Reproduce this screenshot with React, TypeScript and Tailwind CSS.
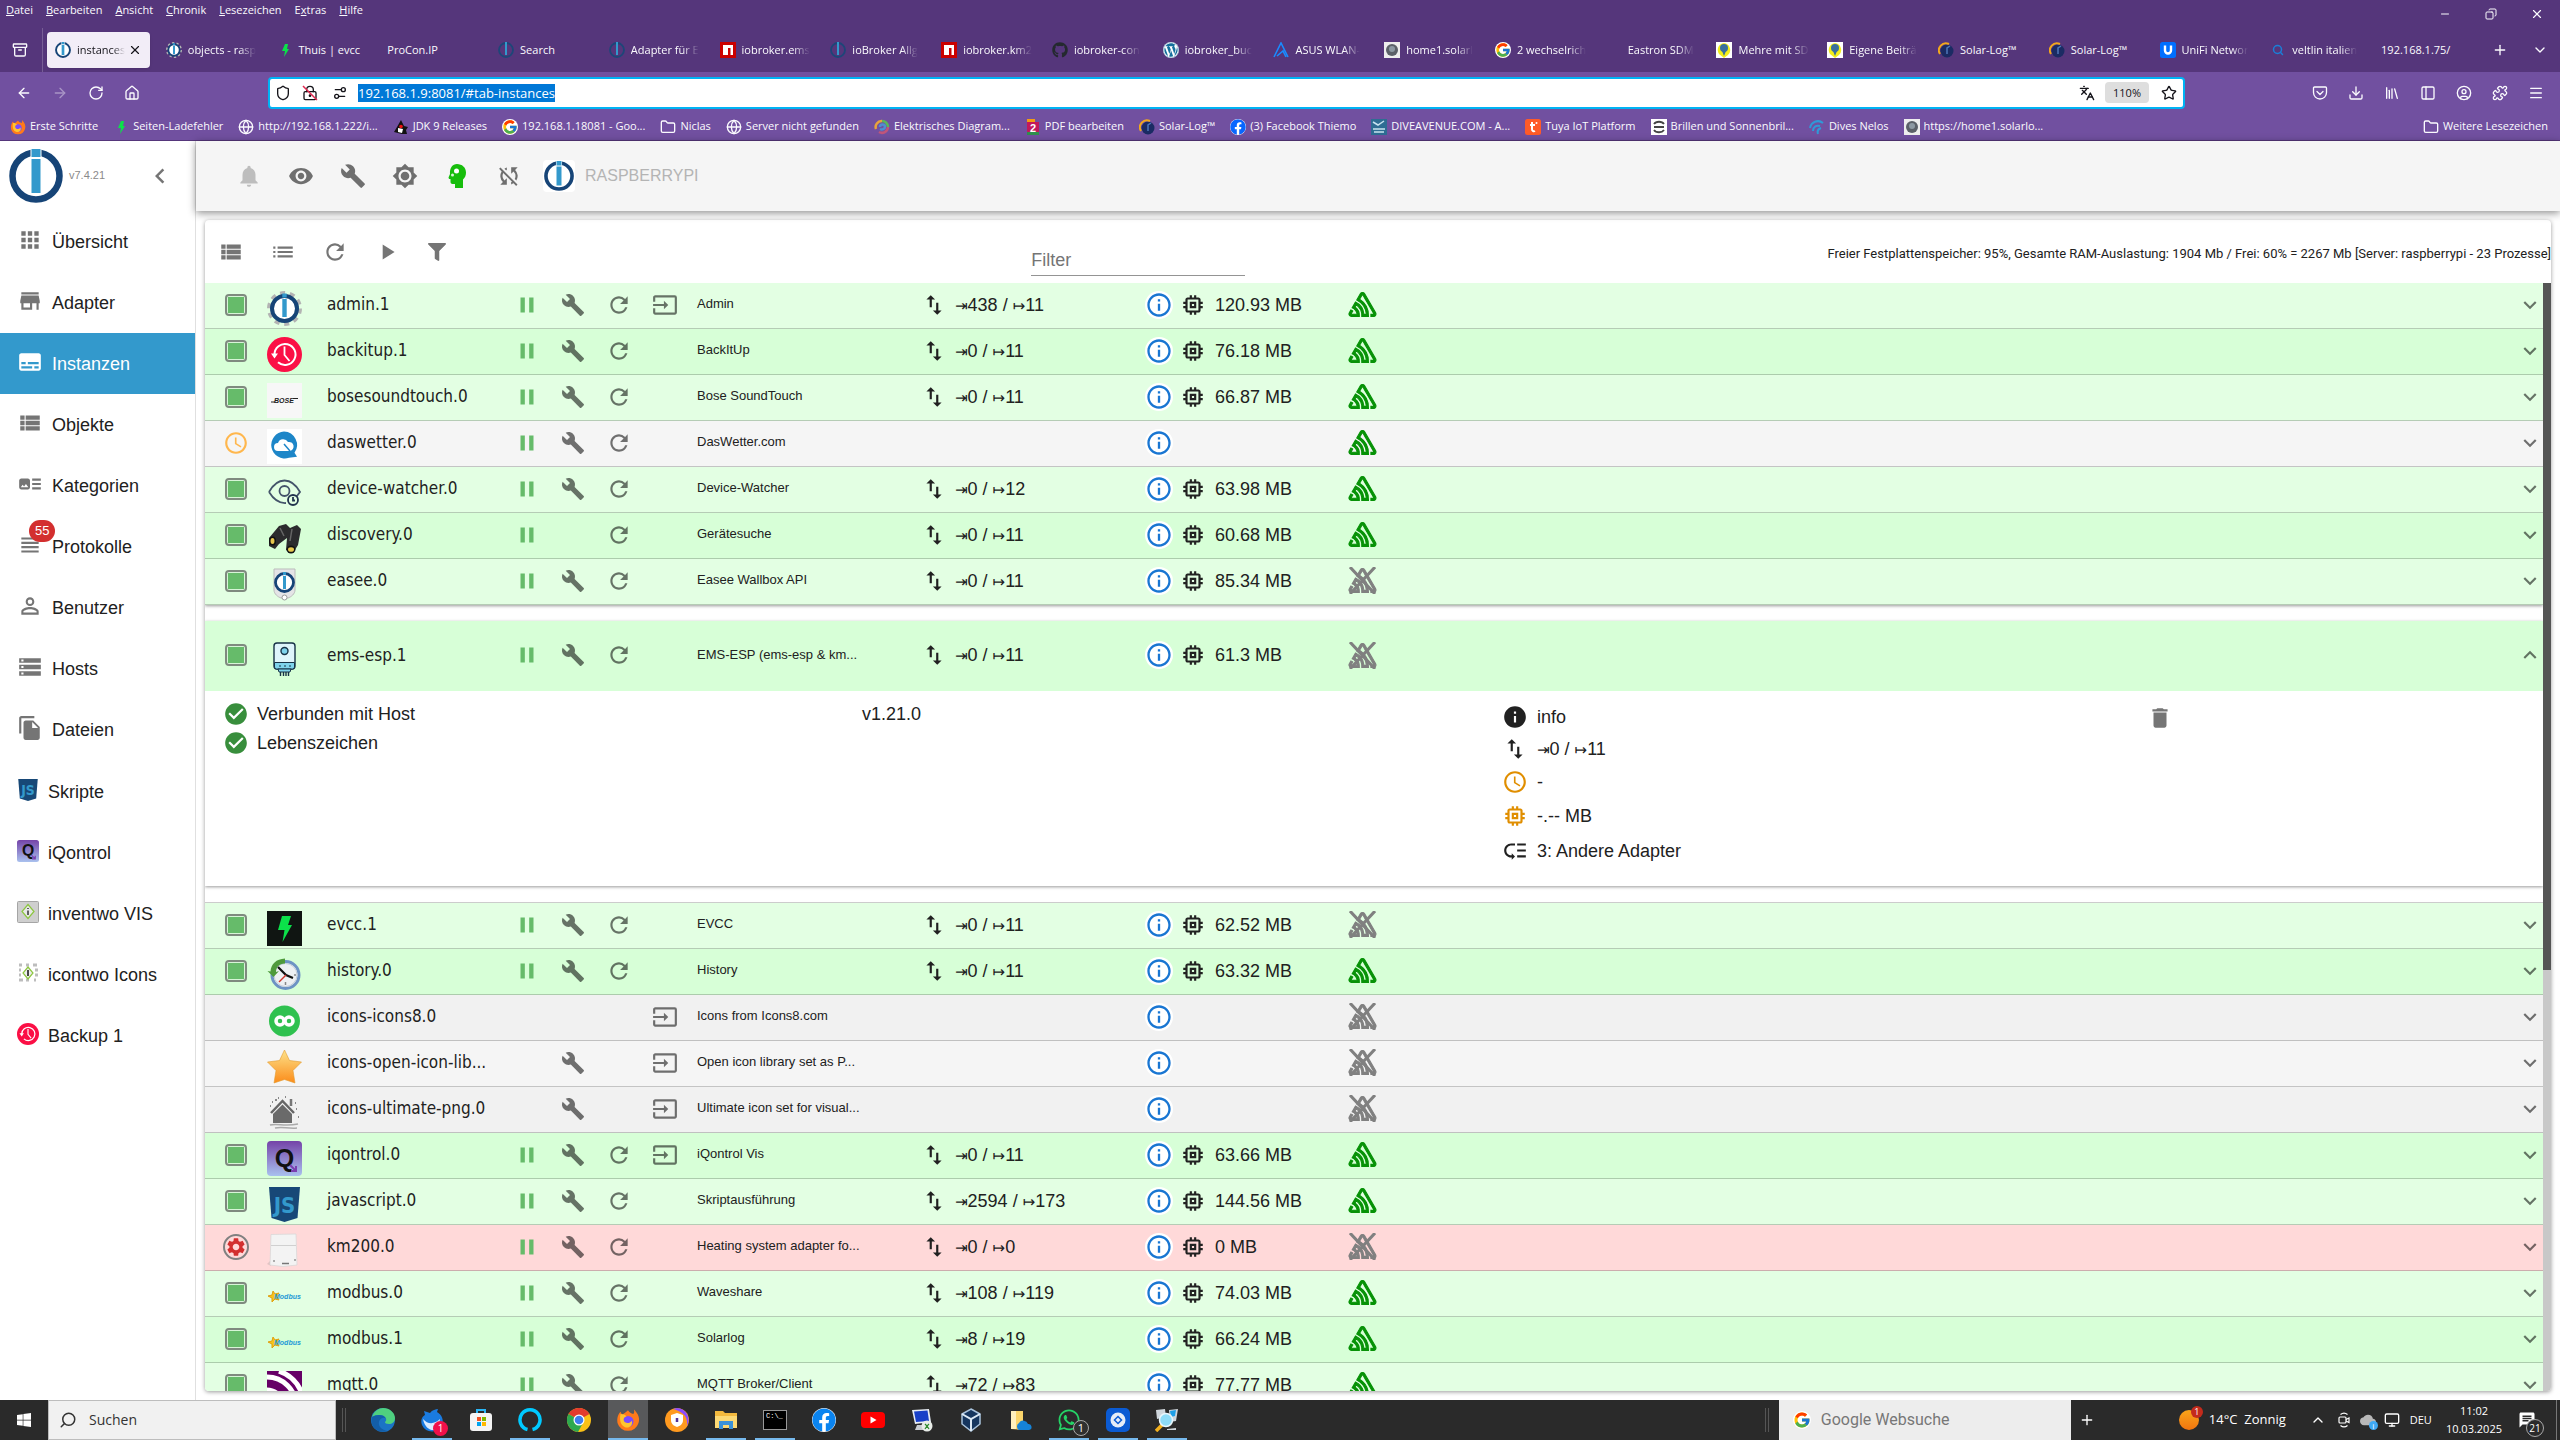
import type { ReactNode } from 'react';
import { ArrowLeft, ArrowRight, RotateCw, House, Shield, LockKeyhole, Settings2, Languages, Star, Download, PanelLeft, CircleUser, Puzzle, Menu, Plus, ChevronDown, ChevronUp, X, Minus, Copy, Archive, Folder, Globe, Search, Library, Monitor } from 'lucide-react';
import {
  MdApps, MdStore, MdSubtitles, MdViewList, MdArtTrack, MdViewHeadline, MdPersonOutline, MdStorage, MdFileCopy,
  MdNotifications, MdVisibility, MdBuild, MdBrightness7, MdSyncDisabled, MdList, MdRefresh, MdPlayArrow, MdPause,
  MdInput, MdImportExport, MdInfoOutline, MdMemory, MdExpandMore, MdExpandLess, MdCheckCircle, MdInfo, MdSchedule,
  MdDelete, MdLowPriority, MdSettings, MdChevronLeft, MdChat, MdCloud,
} from 'react-icons/md';
import { FaFilter, FaGithub, FaWordpress, FaFacebook, FaWindows, FaWhatsapp } from 'react-icons/fa';
import { FcGoogle } from 'react-icons/fc';
import { SiSentry } from 'react-icons/si';

type IconProps = { className?: string };

/* ---------- Logos ---------- */

function IoBrokerLogo({ className }: IconProps) {
  return (
    <svg viewBox="0 0 54 54" className={className}>
      <circle cx="27" cy="27" r="23.5" fill="#fff" stroke="#164477" strokeWidth="6.5" />
      <path d="M21.5 0h11v9h-11z" fill="#fff" />
      <path d="M22.5 0h9v8h-9zM22.5 10h9v34h-9z" fill="#3399cc" />
    </svg>
  );
}

function GearLogo({ className }: IconProps) {
  return (
    <svg viewBox="0 0 35 35" className={className}>
      <circle cx="17.500" cy="17.500" r="15.500" fill="none" stroke="#b3b3b3" strokeWidth="4" strokeDasharray="5 4.740" />
      <circle cx="17.500" cy="17.500" r="12.500" fill="#fff" stroke="#164477" strokeWidth="4" />
      <path d="M15.300 2.500h4.400v4h-4.400zM15.300 8h4.400v18h-4.400z" fill="#3399cc" />
    </svg>
  );
}

function BackupLogo({ className }: IconProps) {
  return (
    <svg viewBox="0 0 35 35" className={className}>
      <circle cx="17.500" cy="17.500" r="17.500" fill="#fb0f45" />
      <path d="M7.500 17.500a10.500 10.500 0 1 1 3.500 7.800" fill="none" stroke="#fff" strokeWidth="2" />
      <path d="M4 16.500h7l-3.500 5z" fill="#fff" />
      <path d="M17.500 9.500v8.500l5 6" fill="none" stroke="#fff" strokeWidth="1.800" />
    </svg>
  );
}

function BoseLogo({ className }: IconProps) {
  return (
    <svg viewBox="0 0 35 35" className={className}>
      <path d="M0 0h35v35H0z" fill="#f7f7f7" />
      <text x="7" y="20" fontFamily="Liberation Sans" fontSize="7" fontWeight="700" fontStyle="italic" fill="#222">BOSE</text>
      <path d="M4 19h4M26 15.500h5" stroke="#222" />
    </svg>
  );
}

function WetterLogo({ className }: IconProps) {
  return (
    <svg viewBox="0 0 35 35" className={className}>
      <path d="M0 0h35v35H0z" fill="#fff" />
      <path d="M17 2.500a13.500 13.500 0 1 0 5 26.300l8-1-2.500-4A13.500 13.500 0 0 0 17 2.500z" fill="#1d86c8" />
      <path d="M11 22a4 4 0 0 1 0-8 5.500 5.500 0 0 1 10-1 4.500 4.500 0 0 1 2 9z" fill="#fff" />
      <path d="M17 15l6 7" stroke="#1d86c8" strokeWidth="1.500" />
    </svg>
  );
}

function WatcherLogo({ className }: IconProps) {
  return (
    <svg viewBox="0 0 35 35" className={className} fill="none" stroke="#44546a" strokeWidth="1.800">
      <path d="M2 17C7 8 12 5.500 17.500 5.500S28 8 33 17c-2 3-4 5-6 7M2 17c5 8 10 11.500 17 11" />
      <circle cx="17.500" cy="16" r="5" />
      <circle cx="26" cy="25" r="5" fill="#e3ffe3" stroke="#22334d" />
      <path d="M26 22v3.500h2" stroke="#22334d" />
    </svg>
  );
}

function BinocularsLogo({ className }: IconProps) {
  return (
    <svg viewBox="0 0 35 35" className={className}>
      <path d="M2 17L12 5l7-2 4 4 7-3 4 4-3 16-5 8-7-3 1-12-8 6-4 5-6-3z" fill="#2b2b2d" />
      <path d="M13 7l4 8M25 8l-2 12" stroke="#666" strokeWidth="1.500" />
      <ellipse cx="5.500" cy="20" rx="3.500" ry="4.500" fill="#111" />
      <ellipse cx="5.500" cy="20" rx="2" ry="3" fill="#e7c74e" />
      <ellipse cx="24" cy="28.500" rx="4.500" ry="4" fill="#111" />
      <ellipse cx="24" cy="28.500" rx="3" ry="2.300" fill="#e7c74e" />
    </svg>
  );
}

function EaseeLogo({ className }: IconProps) {
  return (
    <svg viewBox="0 0 35 35" className={className}>
      <path d="M7 2h21v21c0 4-4 7-7 8h-7c-3-1-7-4-7-8z" fill="#e4e4e6" stroke="#bbb" />
      <circle cx="17.500" cy="30.500" r="2.500" fill="#fff" stroke="#999" />
      <circle cx="17.500" cy="15.500" r="9" fill="#fff" stroke="#164477" strokeWidth="2.800" />
      <path d="M16 5h3v3h-3zM16 9h3v13h-3z" fill="#3399cc" />
    </svg>
  );
}

function BoilerLogo({ className }: IconProps) {
  return (
    <svg viewBox="0 0 35 35" className={className}>
      <path d="M13.500 29v5M16.500 29v5M19 29v5M21.500 29v5" stroke="#173247" strokeWidth="1.400" />
      <rect x="7" y="1" width="21" height="26" rx="3" fill="#dff5fb" stroke="#173247" strokeWidth="1.400" />
      <path d="M7.500 20.500h20V25a2 2 0 0 1-2 2h-16a2 2 0 0 1-2-2z" fill="#7fd3ec" stroke="#173247" />
      <path d="M11 27h13l-1 3H12z" fill="#7fd3ec" stroke="#173247" />
      <circle cx="17.500" cy="9" r="3.500" fill="#7fd3ec" stroke="#173247" strokeWidth="1.400" />
      <path d="M12 24h2m3 0h2m3 0h2" stroke="#173247" />
    </svg>
  );
}

function BoltLogo({ className }: IconProps) {
  return (
    <svg viewBox="0 0 35 35" className={className}>
      <path d="M0 0h35v35H0z" fill="#101512" />
      <path d="M15 5h9l-3 9h4l-9.500 17 2-12H11z" fill="#0be14a" />
    </svg>
  );
}

function HistoryLogo({ className }: IconProps) {
  return (
    <svg viewBox="0 0 35 35" className={className}>
      <circle cx="18.500" cy="18" r="13.500" fill="#eef0f3" stroke="#6d93c4" strokeWidth="3" />
      <circle cx="18.500" cy="18" r="11.500" fill="none" stroke="#c3cdd9" />
      <path d="M18 1.500v5C12 7 9 10 9 15l3-1-5.500 6L.500 14l3 .500C4 7 9 2 18 1.500z" fill="#4f9a3c" />
      <path d="M11 10l8 8 7 3" stroke="#111" strokeWidth="2.200" fill="none" />
      <path d="M19 18l-7 7" stroke="#d0342c" strokeWidth="1.400" />
      <path d="M18.500 25v3M27 18h2" stroke="#888" strokeWidth="1.500" />
    </svg>
  );
}

function Icons8Logo({ className }: IconProps) {
  return (
    <svg viewBox="0 0 35 35" className={className}>
      <circle cx="17.500" cy="18" r="15.500" fill="#2fc14f" />
      <circle cx="13" cy="18" r="4" fill="none" stroke="#fff" strokeWidth="3.500" />
      <circle cx="22" cy="18" r="4" fill="none" stroke="#fff" strokeWidth="3.500" />
    </svg>
  );
}

function StarLogo({ className }: IconProps) {
  return (
    <svg viewBox="0 0 35 35" className={className}>
      <defs>
        <linearGradient id="star" x2="0" y2="1">
          <stop offset="0" stopColor="#fde28a" />
          <stop offset="1" stopColor="#fb8c1a" />
        </linearGradient>
      </defs>
      <path d="M17.500 1l5 10.500 12 1.500-8.500 8.500 2 12.500-10.500-3.500L7 34l2-12.500L.500 13l12-1.500z" fill="url(#star)" stroke="#e39a2d" strokeWidth=".6" />
    </svg>
  );
}

function HouseLogo({ className }: IconProps) {
  return (
    <svg viewBox="0 0 35 35" className={className}>
      <path d="M4 18L15.500 6 27 18" fill="none" stroke="#666" strokeWidth="2.500" />
      <path d="M6 19l9.500-9.500L25 19v9H6z" fill="#6a6a6a" />
      <path d="M24 4v7" stroke="#777" strokeWidth="2.500" />
      <path d="M3 30c8-2 14 2 28-1M8 33c8-2 12 1 22 0" stroke="#aaa" strokeWidth="1.500" fill="none" />
      <path d="M3 11h1m4-6h2m8-3h1m10 12h1m1 8h1M5 7h1m5-4h1m16 5h1" stroke="#888" strokeWidth="2" />
    </svg>
  );
}

function IQontrolLogo({ className }: IconProps) {
  return (
    <svg viewBox="0 0 35 35" className={className}>
      <defs>
        <linearGradient id="iq" x2="0" y2="1">
          <stop offset="0" stopColor="#7443a8" />
          <stop offset="1" stopColor="#a9c1ee" />
        </linearGradient>
      </defs>
      <rect width="35" height="35" rx="4" fill="url(#iq)" />
      <text x="17.500" y="26" textAnchor="middle" fontFamily="Liberation Sans" fontSize="25" fontWeight="700" fill="#111">Q</text>
      <path d="M23 24l6 6m0-5v5h-5" stroke="#7a3fb0" strokeWidth="2" fill="none" />
    </svg>
  );
}

function JsLogo({ className }: IconProps) {
  return (
    <svg viewBox="0 0 35 35" className={className}>
      <path d="M2 0h31l-2.500 31-13 4-13-4z" fill="#174877" />
      <text x="17.500" y="26" textAnchor="middle" fontFamily="DejaVu Sans Condensed" fontSize="22" fontWeight="700" fill="#3399cc">JS</text>
    </svg>
  );
}

function HeaterLogo({ className }: IconProps) {
  return (
    <svg viewBox="0 0 35 35" className={className}>
      <path d="M0 31l4-4v6z" fill="#e3c3c3" />
      <path d="M4 1.500L29 1l1 31-14 1.500L3 32z" fill="#f3f3f3" stroke="#d6d6d6" strokeWidth=".7" />
      <path d="M4 12.500h25" stroke="#d0d0d0" />
      <path d="M15 30.500h7" stroke="#777" strokeWidth="1.500" />
      <path d="M7 27v2m21-3v2" stroke="#666" />
    </svg>
  );
}

function ModbusLogo({ className }: IconProps) {
  return (
    <svg viewBox="0 0 35 35" className={className}>
      <path d="M6 12l2 3 4-1-2 3 2 4-4-1-3 3v-4l-4-2 4-1z" fill="#f5c518" stroke="#e0a010" />
      <text x="7" y="20" fontFamily="Liberation Sans" fontSize="7" fontWeight="700" fontStyle="italic" fill="#1e9ad6">Modbus</text>
    </svg>
  );
}

function MqttLogo({ className }: IconProps) {
  return (
    <svg viewBox="0 0 35 35" className={className}>
      <path d="M0 0h35v35H0z" fill="#660066" />
      <path d="M0 6a29 29 0 0 1 29 29M0 19a16 16 0 0 1 16 16M12 0a36 36 0 0 1 23 23" fill="none" stroke="#fff" strokeWidth="5" />
    </svg>
  );
}

function InventwoLogo({ className }: IconProps) {
  return (
    <svg viewBox="0 0 22 22" className={className}>
      <rect x=".5" y=".5" width="21" height="21" rx="1" fill="#cfcfcf" stroke="#a5a5a5" />
      <path d="M11 3.500l6 7-6 7-6-7z" fill="#e8e8e8" stroke="#8cc63f" strokeWidth="1.200" />
      <path d="M11 7v1m0 1.500V14" stroke="#333" strokeWidth="1.500" />
    </svg>
  );
}

function IcontwoLogo({ className }: IconProps) {
  return (
    <svg viewBox="0 0 22 22" className={className}>
      <path d="M2 3h3m4 0h3m4 0h4M2 8h2m14 0h3M2 13h2m14 0h3M2 18h4m3 0h3m5 0h2" stroke="#bdbdbd" strokeWidth="3" />
      <path d="M11 5l5 6-5 6-5-6z" fill="#eee" stroke="#8cc63f" strokeWidth="1.200" />
      <path d="M11 8v6" stroke="#333" strokeWidth="1.800" />
    </svg>
  );
}

function ExpertIcon({ className }: IconProps) {
  return (
    <svg viewBox="0 0 26 26" className={className} fill="#17bd0c">
      <path d="M13 1c5 0 9 3.500 9 8.500 0 3-1 5-3 7V25h-8v-4H8.500C7 21 6.500 20 6.500 18.500V16H5l-.500-1.500L6 11C5.500 5 8.500 1 13 1z" />
      <circle cx="12.500" cy="8" r="2.500" fill="#fff" />
      <circle cx="8.500" cy="12" r="1.500" fill="#d8f5d5" />
    </svg>
  );
}

function PocketIcon({ className }: IconProps) {
  return (
    <svg viewBox="0 0 16 16" className={className} fill="none" stroke="currentColor" strokeWidth="1.300" strokeLinecap="round" strokeLinejoin="round">
      <path d="M2.500 2h11a1 1 0 0 1 1 1v4.500a6.500 6.500 0 0 1-13 0V3a1 1 0 0 1 1-1z" />
      <path d="M5 6.500l3 3 3-3" />
    </svg>
  );
}

function MeetNowIcon({ className }: IconProps) {
  return (
    <svg viewBox="0 0 16 16" className={className} fill="none" stroke="currentColor" strokeWidth="1.200">
      <rect x="3" y="5" width="7" height="6" rx="1" />
      <path d="M10 7.500l3-1.500v4.500L10 9M4.500 2.500C6.500.8 9.500.8 11.500 2.500M4.500 13.500c2 1.700 5 1.700 7 0" />
    </svg>
  );
}

/* ---------- Small favicons ---------- */

const favicons: Record<string, ReactNode> = {
  none: <span className="block size-4" />,
  iob: <IoBrokerLogo className="size-4" />,
  gear: <GearLogo className="size-4" />,
  iobdark: (
    <svg viewBox="0 0 16 16" className="size-4">
      <circle cx="8" cy="8" r="7" fill="none" stroke="#1d4678" strokeWidth="1.800" />
      <path d="M7 0h2v13H7z" fill="#3399cc" />
    </svg>
  ),
  bolt: (
    <svg viewBox="0 0 16 16" className="size-4">
      <path d="M8 2h3L10 7h2l-5 8 1-6H5z" fill="#0be14a" />
    </svg>
  ),
  npm: (
    <svg viewBox="0 0 16 16" className="size-4">
      <path d="M0 0h16v16H0z" fill="#cb0000" />
      <path d="M3 3h10v10h-2.500V6H8v7H3z" fill="#fff" />
    </svg>
  ),
  github: <FaGithub className="size-4 text-[#24292f]" />,
  wordpress: <FaWordpress className="size-4 rounded-full bg-white text-[#14709d]" />,
  asus: (
    <svg viewBox="0 0 16 16" className="size-4" fill="none" stroke="#1a8cff" strokeWidth="1.600">
      <path d="M1 15L8 1l7 14M4 14l6-5 3 6" />
    </svg>
  ),
  solarhome: (
    <svg viewBox="0 0 16 16" className="size-4">
      <path d="M0 0h16v16H0z" fill="#eee" />
      <circle cx="8" cy="8" r="6" fill="#5b6068" />
      <circle cx="8" cy="7" r="3" fill="#8d99a3" />
    </svg>
  ),
  google: <FcGoogle className="size-4 rounded-full bg-white" />,
  forum: (
    <svg viewBox="0 0 16 16" className="size-4">
      <path d="M0 0h16v16H0z" fill="#fff" />
      <path d="M8 1a7 7 0 0 1 4 12l-4 3-5-4A7 7 0 0 1 8 1z" fill="#f4ee1b" />
      <circle cx="8" cy="6" r="4" fill="#3a6f9c" />
      <path d="M6 9h4l-2 5z" fill="#3a6f9c" />
    </svg>
  ),
  solarlog: (
    <svg viewBox="0 0 16 16" className="size-4">
      <circle cx="9" cy="9" r="6.500" fill="#1b2b63" />
      <path d="M2 12A7 7 0 0 1 11 2" fill="none" stroke="#f2a81d" strokeWidth="2" />
      <path d="M9 12V6l3-2" fill="none" stroke="#4f77bb" strokeWidth="1.500" />
    </svg>
  ),
  unifi: (
    <svg viewBox="0 0 16 16" className="size-4">
      <rect width="16" height="16" rx="2.500" fill="#006fff" />
      <path d="M5 3.500v5a3 3 0 0 0 6 0v-5" fill="none" stroke="#fff" strokeWidth="2.400" />
    </svg>
  ),
  search: <Search className="size-4 p-0.5 text-[#1a7fd8]" strokeWidth={3} />,
  firefox: (
    <svg viewBox="0 0 16 16" className="size-4">
      <path d="M8 1.500c1 1.500 2 2 3.500 2.500 1-1 .5-2 .5-3 3 3 4 6 3 9a7.300 7.300 0 0 1-14 0C.5 6.500 1.500 4 3 2.500l1 2C5 4 6.500 3 8 1.500z" fill="#ff7a1a" />
      <circle cx="8" cy="9" r="3.700" fill="#7a4bff" />
      <path d="M3 4c2 0 3 .5 4 1.500C5 6 4.500 8 6 9.500c1.500 1 3.500.5 4.500-1 1 3-1.500 5-4 4.500C3.500 12 2 9 3 4z" fill="#ffc52e" />
    </svg>
  ),
  globe: <Globe className="size-4" strokeWidth={2} />,
  duke: (
    <svg viewBox="0 0 16 16" className="size-4">
      <path d="M8 1l3 6 4 1-2 3 1 4H9l-4-1-4-1 3-5z" fill="#111" />
      <path d="M5 9l5 1-1 4-4-1z" fill="#fff" />
      <circle cx="8" cy="7.500" r="1.800" fill="#e11" />
    </svg>
  ),
  folder: <Folder className="size-4" strokeWidth={2} />,
  swirl: (
    <svg viewBox="0 0 16 16" className="size-4" fill="none" strokeWidth="2.500">
      <path d="M2 10A6 6 0 0 1 8 2" stroke="#e8a33c" />
      <path d="M8 2a6 6 0 0 1 6 6" stroke="#5bb65b" />
      <path d="M14 8a6 6 0 0 1-9 5" stroke="#c0567a" />
      <path d="M6 8a2.500 2.500 0 0 1 5 0c0 2-3 3-5 2" stroke="#4f8fd0" />
    </svg>
  ),
  pdf: (
    <svg viewBox="0 0 16 16" className="size-4">
      <path d="M2 0h8v4H2z" fill="#f39b12" />
      <path d="M2 3h12v5H2z" fill="#c2185b" />
      <path d="M2 8h12v5H2z" fill="#c2185b" />
      <path d="M2 13h12v3H2z" fill="#2f8f4e" />
      <text x="8" y="13" textAnchor="middle" fontFamily="Liberation Sans" fontSize="11" fontWeight="700" fill="#fff">2</text>
    </svg>
  ),
  facebook: <FaFacebook className="size-4 rounded-full bg-white text-[#0866ff]" />,
  dive: (
    <svg viewBox="0 0 16 16" className="size-4">
      <path d="M0 0h16v16H0z" fill="#2e6d93" />
      <path d="M2 3l5 3 6-4M2 10h12M3 13h10" stroke="#c7e3f0" strokeWidth="1.500" fill="none" />
    </svg>
  ),
  tuya: (
    <svg viewBox="0 0 16 16" className="size-4">
      <rect width="16" height="16" rx="2.500" fill="#ff5a28" />
      <path d="M7 3v7a2 2 0 0 0 3 2M5 6h5" stroke="#fff" strokeWidth="2" fill="none" />
      <circle cx="11.500" cy="4" r="1" fill="#fff" />
    </svg>
  ),
  lens: (
    <svg viewBox="0 0 16 16" className="size-4">
      <path d="M0 0h16v16H0z" fill="#fff" />
      <path d="M3 5c2-3 8-3 10 0M3 11c2 3 8 3 10 0M3 8h10" stroke="#444" strokeWidth="1.800" fill="none" />
    </svg>
  ),
  nelos: (
    <svg viewBox="0 0 16 16" className="size-4" fill="none" stroke="#2f9ad8" strokeWidth="2">
      <path d="M1 9c1-6 8-9 13-5M4 12c0-4 3-6 7-5M9 15c-1-3 0-5 3-6" />
    </svg>
  ),
};

/* ---------- Data ---------- */

const tabs: { title: string; icon?: string; fade?: boolean; active?: boolean }[] = [
  { title: 'instances', icon: 'iob', fade: true, active: true },
  { title: 'objects - rasp', icon: 'gear', fade: true },
  { title: 'Thuis | evcc', icon: 'bolt' },
  { title: 'ProCon.IP' },
  { title: 'Search', icon: 'iobdark' },
  { title: 'Adapter für E', icon: 'iobdark', fade: true },
  { title: 'iobroker.ems', icon: 'npm', fade: true },
  { title: 'ioBroker Allg', icon: 'iobdark', fade: true },
  { title: 'iobroker.km2', icon: 'npm', fade: true },
  { title: 'iobroker-con', icon: 'github', fade: true },
  { title: 'iobroker_buc', icon: 'wordpress', fade: true },
  { title: 'ASUS WLAN-', icon: 'asus', fade: true },
  { title: 'home1.solarl', icon: 'solarhome', fade: true },
  { title: '2 wechselrich', icon: 'google', fade: true },
  { title: 'Eastron SDM', icon: 'none', fade: true },
  { title: 'Mehre mit SD', icon: 'forum', fade: true },
  { title: 'Eigene Beiträ', icon: 'forum', fade: true },
  { title: 'Solar-Log™', icon: 'solarlog' },
  { title: 'Solar-Log™', icon: 'solarlog' },
  { title: 'UniFi Networ', icon: 'unifi', fade: true },
  { title: 'veltlin italien', icon: 'search', fade: true },
  { title: '192.168.1.75/' },
];

const bookmarks = [
  { title: 'Erste Schritte', icon: 'firefox' },
  { title: 'Seiten-Ladefehler', icon: 'bolt' },
  { title: 'http://192.168.1.222/i...', icon: 'globe' },
  { title: 'JDK 9 Releases', icon: 'duke' },
  { title: '192.168.1.18081 - Goo...', icon: 'google' },
  { title: 'Niclas', icon: 'folder' },
  { title: 'Server nicht gefunden', icon: 'globe' },
  { title: 'Elektrisches Diagram...', icon: 'swirl' },
  { title: 'PDF bearbeiten', icon: 'pdf' },
  { title: 'Solar-Log™', icon: 'solarlog' },
  { title: '(3) Facebook Thiemo', icon: 'facebook' },
  { title: 'DIVEAVENUE.COM - A...', icon: 'dive' },
  { title: 'Tuya IoT Platform', icon: 'tuya' },
  { title: 'Brillen und Sonnenbril...', icon: 'lens' },
  { title: 'Dives Nelos', icon: 'nelos' },
  { title: 'https://home1.solarlo...', icon: 'solarhome' },
];

const menuItems = [
  { label: 'Übersicht', icon: MdApps },
  { label: 'Adapter', icon: MdStore },
  { label: 'Instanzen', icon: MdSubtitles, active: true },
  { label: 'Objekte', icon: MdViewList },
  { label: 'Kategorien', icon: MdArtTrack },
  { label: 'Protokolle', icon: MdViewHeadline, badge: 55 },
  { label: 'Benutzer', icon: MdPersonOutline },
  { label: 'Hosts', icon: MdStorage },
  { label: 'Dateien', icon: MdFileCopy },
];

const pluginItems = [
  { label: 'Skripte', icon: JsLogo },
  { label: 'iQontrol', icon: IQontrolLogo },
  { label: 'inventwo VIS', icon: InventwoLogo },
  { label: 'icontwo Icons', icon: IcontwoLogo },
  { label: 'Backup 1', icon: BackupLogo },
];

type Instance = {
  name: string;
  title: string;
  logo: (props: IconProps) => ReactNode;
  bg: string;
  status?: 'ok' | 'scheduled' | 'error';
  run?: boolean;
  config?: boolean;
  link?: boolean;
  input?: number;
  output?: number;
  ram?: string;
  sentry?: boolean;
};

const GREEN_LIGHT = 'bg-[#e3ffe3]';
const GREEN = 'bg-[#d7ffd7]';

const firstGroup: Instance[] = [
  { name: 'admin.1', title: 'Admin', logo: GearLogo, bg: GREEN_LIGHT, status: 'ok', run: true, config: true, link: true, input: 438, output: 11, ram: '120.93', sentry: true },
  { name: 'backitup.1', title: 'BackItUp', logo: BackupLogo, bg: GREEN, status: 'ok', run: true, config: true, input: 0, output: 11, ram: '76.18', sentry: true },
  { name: 'bosesoundtouch.0', title: 'Bose SoundTouch', logo: BoseLogo, bg: GREEN_LIGHT, status: 'ok', run: true, config: true, input: 0, output: 11, ram: '66.87', sentry: true },
  { name: 'daswetter.0', title: 'DasWetter.com', logo: WetterLogo, bg: 'bg-[#f5f5f5]', status: 'scheduled', run: true, config: true, sentry: true },
  { name: 'device-watcher.0', title: 'Device-Watcher', logo: WatcherLogo, bg: GREEN_LIGHT, status: 'ok', run: true, config: true, input: 0, output: 12, ram: '63.98', sentry: true },
  { name: 'discovery.0', title: 'Gerätesuche', logo: BinocularsLogo, bg: GREEN, status: 'ok', run: true, input: 0, output: 11, ram: '60.68', sentry: true },
  { name: 'easee.0', title: 'Easee Wallbox API', logo: EaseeLogo, bg: GREEN_LIGHT, status: 'ok', run: true, config: true, input: 0, output: 11, ram: '85.34' },
];

const expanded: Instance = { name: 'ems-esp.1', title: 'EMS-ESP (ems-esp & km...', logo: BoilerLogo, bg: GREEN, status: 'ok', run: true, config: true, input: 0, output: 11, ram: '61.3' };

const secondGroup: Instance[] = [
  { name: 'evcc.1', title: 'EVCC', logo: BoltLogo, bg: GREEN_LIGHT, status: 'ok', run: true, config: true, input: 0, output: 11, ram: '62.52' },
  { name: 'history.0', title: 'History', logo: HistoryLogo, bg: GREEN, status: 'ok', run: true, config: true, input: 0, output: 11, ram: '63.32', sentry: true },
  { name: 'icons-icons8.0', title: 'Icons from Icons8.com', logo: Icons8Logo, bg: 'bg-[#f1f1f1]', link: true },
  { name: 'icons-open-icon-lib...', title: 'Open icon library set as P...', logo: StarLogo, bg: 'bg-[#f5f5f5]', config: true, link: true },
  { name: 'icons-ultimate-png.0', title: 'Ultimate icon set for visual...', logo: HouseLogo, bg: 'bg-[#f1f1f1]', config: true, link: true },
  { name: 'iqontrol.0', title: 'iQontrol Vis', logo: IQontrolLogo, bg: GREEN, status: 'ok', run: true, config: true, link: true, input: 0, output: 11, ram: '63.66', sentry: true },
  { name: 'javascript.0', title: 'Skriptausführung', logo: JsLogo, bg: GREEN_LIGHT, status: 'ok', run: true, config: true, input: 2594, output: 173, ram: '144.56', sentry: true },
  { name: 'km200.0', title: 'Heating system adapter fo...', logo: HeaterLogo, bg: 'bg-[#ffd9d9]', status: 'error', run: true, config: true, input: 0, output: 0, ram: '0' },
  { name: 'modbus.0', title: 'Waveshare', logo: ModbusLogo, bg: GREEN_LIGHT, status: 'ok', run: true, config: true, input: 108, output: 119, ram: '74.03', sentry: true },
  { name: 'modbus.1', title: 'Solarlog', logo: ModbusLogo, bg: GREEN, status: 'ok', run: true, config: true, input: 8, output: 19, ram: '66.24', sentry: true },
  { name: 'mqtt.0', title: 'MQTT Broker/Client', logo: MqttLogo, bg: GREEN_LIGHT, status: 'ok', run: true, config: true, input: 72, output: 83, ram: '77.77', sentry: true },
];

/* ---------- Browser chrome ---------- */

function MenuBar() {
  const items = ['Datei', 'Bearbeiten', 'Ansicht', 'Chronik', 'Lesezeichen'];
  return (
    <div className="flex h-7 justify-between">
      <div className="flex h-5 items-center gap-[13px] pl-1.5">
        {items.map((item) => (
          <button key={item}><u>{item[0]}</u>{item.slice(1)}</button>
        ))}
        <button>E<u>x</u>tras</button>
        <button><u>H</u>ilfe</button>
      </div>
      <div className="flex items-center">
        <button aria-label="Minimieren" className="flex w-[46px] justify-center"><Minus className="size-3" /></button>
        <button aria-label="Wiederherstellen" className="flex w-[46px] justify-center"><Copy className="size-3 -scale-x-100" strokeWidth={2} /></button>
        <button aria-label="Schließen" className="flex w-[46px] justify-center"><X className="size-3.5" strokeWidth={2} /></button>
      </div>
    </div>
  );
}

function TabStrip() {
  return (
    <div className="flex h-11 items-center">
      <button aria-label="Tabs" className="flex h-full w-[43px] items-center border-r border-white/20 pl-3">
        <Archive className="size-4" strokeWidth={2} />
      </button>
      <div className="flex min-w-0 flex-1">
        {tabs.map((tab, i) => (
          <div key={i} className="min-w-0 flex-1 px-1">
            <div className={`flex h-9 items-center rounded pl-2 ${tab.active ? 'bg-[#f2edf7] pr-2 text-[#15141a] shadow-sm' : ''}`}>
              {tab.icon && <span className="mr-1.5 shrink-0">{favicons[tab.icon]}</span>}
              <span className={`whitespace-nowrap ${tab.fade ? '[mask-image:linear-gradient(to_right,#000_75%,transparent)]' : ''}`}>
                {tab.title}
              </span>
              {tab.active && <button aria-label="Tab schließen" className="ml-auto"><X className="size-3.5" strokeWidth={2} /></button>}
            </div>
          </div>
        ))}
      </div>
      <button aria-label="Neuer Tab" className="flex w-10 justify-center"><Plus className="size-4" /></button>
      <button aria-label="Alle Tabs" className="flex w-10 justify-center"><ChevronDown className="size-4" /></button>
    </div>
  );
}

function NavBar() {
  return (
    <div className="flex h-[41px] items-center justify-between">
      <div className="flex w-[268px] items-center pl-1.5">
        {[ArrowLeft, ArrowRight, RotateCw, House].map((Icon, i) => (
          <button key={i} aria-label="Navigation" className={`flex w-9 justify-center ${i === 1 ? 'opacity-40' : ''}`}>
            <Icon className="size-4" strokeWidth={2} />
          </button>
        ))}
      </div>
      <div className="flex h-8 min-w-0 flex-1 items-center rounded border-2 border-[#00b3f4] bg-white pr-1.5 text-[13px] text-[#15141a]">
        <Shield className="mx-[5px] size-4" strokeWidth={2} />
        <span className="relative mx-1.5">
          <LockKeyhole className="size-4" strokeWidth={2} />
          <svg viewBox="0 0 16 16" className="absolute inset-0 size-4"><path d="M1 1l14 14" stroke="#e22850" strokeWidth="1.500" /></svg>
        </span>
        <Settings2 className="ml-2 mr-1.5 size-4 -scale-y-100" strokeWidth={2} />
        <span className="ml-1 bg-[#0078d7] leading-[18px] text-white">192.168.1.9:8081/#tab-instances</span>
        <span className="flex-1" />
        <Languages className="size-4" strokeWidth={2} />
        <span className="ml-2.5 rounded bg-[#dedede] px-2 text-[11px] leading-[21px]">110%</span>
        <Star className="ml-3 size-4" strokeWidth={2} />
      </div>
      <div className="flex w-[375px] items-center justify-end pr-1.5">
        {[PocketIcon, Download, Library, PanelLeft, CircleUser, Puzzle, Menu].map((Icon, i) => (
          <button key={i} aria-label="Werkzeug" className="flex w-9 justify-center">
            <Icon className="size-4" />
          </button>
        ))}
      </div>
    </div>
  );
}

function BookmarkBar() {
  return (
    <div className="flex h-7 items-center justify-between border-b border-[#55367b] pl-2.5 pr-3">
      <div className="flex items-center gap-[15px]">
        {bookmarks.map((bookmark) => (
          <a key={bookmark.title} href="#" className="flex items-center gap-1 whitespace-nowrap">
            {favicons[bookmark.icon]}
            {bookmark.title}
          </a>
        ))}
      </div>
      <a href="#" className="flex items-center gap-1">{favicons.folder}Weitere Lesezeichen</a>
    </div>
  );
}

/* ---------- Admin UI ---------- */

function Sidebar() {
  return (
    <nav className="w-[196px] shrink-0 border-r border-[#e0e0e0] bg-white text-lg">
      <div className="flex h-[70px] items-center pl-[9px]">
        <IoBrokerLogo className="size-[54px]" />
        <span className="ml-1.5 text-[11px] text-[#8a8a8a]">v7.4.21</span>
        <button aria-label="Menü einklappen" className="ml-auto mr-5 text-[#757575]"><MdChevronLeft className="size-[30px]" /></button>
      </div>
      {menuItems.map((item) => (
        <a key={item.label} href="#" className={`flex h-[61px] items-center pl-[17px] pt-px ${item.active ? 'bg-[#3399cc] text-white' : ''}`}>
          <span className={`relative mb-1 mr-[9px] ${item.active ? '' : 'text-[#757575]'}`}>
            <item.icon className="size-[26px]" />
            {item.badge && (
              <span className="absolute -top-3 left-3 rounded-full bg-[#d32f2f] px-1.5 text-[13px] leading-[22px] text-white">{item.badge}</span>
            )}
          </span>
          {item.label}
        </a>
      ))}
      {pluginItems.map((item) => (
        <a key={item.label} href="#" className="flex h-[61px] items-center pl-[17px] pt-0.5">
          <item.icon className="mb-1 mr-[9px] size-[22px]" />
          {item.label}
        </a>
      ))}
    </nav>
  );
}

function Messages({ input, output }: { input?: number; output?: number }) {
  return (
    <span className="whitespace-nowrap">
      <span className="font-['DejaVu_Sans'] text-[15px]">⇥</span>{input} / <span className="font-['DejaVu_Sans'] text-[15px]">↦</span>{output}
    </span>
  );
}

function StatusIcon({ status }: { status?: string }) {
  if (status === 'ok') {
    return (
      <span className="flex size-[22px] items-center justify-center rounded-sm border-2 border-[#7f8a7f] bg-[#d7f5d7]">
        <span className="size-4 bg-[#66bb6a]" />
      </span>
    );
  }
  if (status === 'scheduled') {
    return <MdSchedule className="size-[26px] text-[#ffb74d]" />;
  }
  if (status === 'error') {
    return <MdSettings className="size-[26px] rounded-full border-2 border-[#808080] text-[#d32f2f]" />;
  }
  return null;
}

function SentryIcon({ enabled }: { enabled?: boolean }) {
  if (enabled) {
    return <SiSentry className="size-[27px] overflow-visible text-[#079207]" stroke="currentColor" strokeWidth={1} />;
  }
  return (
    <span className="relative text-[#808080]">
      <SiSentry className="size-[27px] overflow-visible" stroke="currentColor" strokeWidth={1} />
      <svg viewBox="0 0 27 27" className="absolute inset-0 size-[27px]"><path d="M1 0l25 27M26 0L1 27" stroke="currentColor" strokeWidth="3" /></svg>
    </span>
  );
}

function InstanceRow({ instance, open }: { instance: Instance; open?: boolean }) {
  const Logo = instance.logo;
  return (
    <div className={`flex shrink-0 items-center pb-0.5 ${instance.bg} ${open ? 'h-[70px]' : 'h-[46px] border-b border-black/20'}`}>
      <span className="flex w-[62px] shrink-0 justify-center"><StatusIcon status={instance.status} /></span>
      <span className="w-[60px] shrink-0 pt-2"><Logo className="size-[35px]" /></span>
      <span className="w-[177px] shrink-0 font-['DejaVu_Sans_Condensed'] text-[17px]">{instance.name}</span>
      <div className="flex w-[184px] shrink-0 text-black/55">
        <span className="flex w-[46px] justify-center">
          {instance.run && <button aria-label="Anhalten"><MdPause className="size-[26px] text-[#66bb6a]" /></button>}
        </span>
        <span className="flex w-[46px] justify-center">
          {instance.config && <button aria-label="Einstellungen"><MdBuild className="size-6" /></button>}
        </span>
        <span className="flex w-[46px] justify-center">
          {instance.run && <button aria-label="Neu starten"><MdRefresh className="size-[26px]" /></button>}
        </span>
        <span className="flex w-[46px] justify-center">
          {instance.link && <button aria-label="Öffnen"><MdInput className="size-[26px]" /></button>}
        </span>
      </div>
      <span className="w-[233px] shrink-0 pl-[9px] text-[13px]">{instance.title}</span>
      <div className="flex w-[224px] shrink-0 items-center gap-2">
        {instance.ram && (
          <>
            <MdImportExport className="size-[26px]" />
            <Messages input={instance.input} output={instance.output} />
          </>
        )}
      </div>
      <div className="flex w-[204px] shrink-0 items-center">
        <button aria-label="Info"><MdInfoOutline className="size-[28px] rounded-full bg-white text-[#1976d2]" /></button>
        {instance.ram && (
          <>
            <MdMemory className="ml-[7px] size-[26px]" />
            <span className="ml-[9px]">{instance.ram} MB</span>
          </>
        )}
      </div>
      <SentryIcon enabled={instance.sentry} />
      <button aria-label="Aufklappen" className="ml-auto text-black/55">
        {open ? <MdExpandLess className="size-[26px]" /> : <MdExpandMore className="size-[26px]" />}
      </button>
    </div>
  );
}

function InstanceDetails() {
  return (
    <div className="flex h-[195px] pt-2">
      <div className="flex w-[657px] flex-col pl-[18px]">
        {['Verbunden mit Host', 'Lebenszeichen'].map((text) => (
          <p key={text} className="flex h-[29px] items-center gap-2">
            <MdCheckCircle className="size-[26px] text-[#388e3c]" />{text}
          </p>
        ))}
      </div>
      <p className="w-[640px] pt-px">v1.21.0</p>
      <div className="flex w-[645px] flex-col pt-0.5">
        <p className="flex h-[31px] items-center gap-[9px]"><MdInfo className="size-[26px]" />info</p>
        <p className="flex h-[33px] items-center gap-[9px]"><MdImportExport className="size-[26px]" /><Messages input={0} output={11} /></p>
        <p className="flex h-[33px] items-center gap-[9px]"><MdSchedule className="size-[26px] text-[#e08e00]" />-</p>
        <p className="flex h-[35px] items-center gap-[9px]"><MdMemory className="size-[26px] text-[#e08e00]" />-.-- MB</p>
        <p className="flex h-[35px] items-center gap-[9px]"><MdLowPriority className="size-[26px]" />3: Andere Adapter</p>
      </div>
      <button aria-label="Löschen" className="mt-1.5 self-start text-[#757575]"><MdDelete className="size-[26px]" /></button>
    </div>
  );
}

function Toolbar() {
  return (
    <div className="flex h-[63px] shrink-0 justify-between">
      <div className="flex items-center text-[#757575]">
        {[MdViewList, MdList, MdRefresh, MdPlayArrow].map((Icon, i) => (
          <button key={i} aria-label="Ansicht" className="flex w-[52px] justify-center"><Icon className="size-[26px]" /></button>
        ))}
        <button aria-label="Filtern" className="flex w-12 justify-center"><FaFilter className="size-[18px]" /></button>
      </div>
      <input
        aria-label="Filter"
        placeholder="Filter"
        className="mr-3 mt-5 h-9 w-[214px] border-b border-[#949494] pt-1.5 text-lg outline-none placeholder:text-[#757575]"
      />
      <p className="mt-6 font-[Roboto] text-[13px]">
        Freier Festplattenspeicher: 95%, Gesamte RAM-Auslastung: 1904 Mb / Frei: 60% = 2267 Mb [Server: raspberrypi - 23 Prozesse]
      </p>
    </div>
  );
}

function AppHeader() {
  const icons = [MdVisibility, MdBuild, MdBrightness7, ExpertIcon, MdSyncDisabled];
  return (
    <header className="relative flex h-[70px] shrink-0 items-center bg-[#f5f5f5] pl-[27px] text-[#6f6f6f] shadow-[0_2px_8px_rgba(0,0,0,0.45)]">
      <button aria-label="Benachrichtigungen" className="flex w-[52px] justify-center text-[#bdbdbd]"><MdNotifications className="size-[26px]" /></button>
      {icons.map((Icon, i) => (
        <button key={i} aria-label="Aktion" className="flex w-[52px] justify-center"><Icon className="size-[26px]" /></button>
      ))}
      <IoBrokerLogo className="ml-2 size-8 rounded-sm bg-white p-px" />
      <span className="ml-2.5 text-base text-[#b4b4b4]">RASPBERRYPI</span>
    </header>
  );
}

/* ---------- Taskbar ---------- */

const taskIcons: { icon: ReactNode; running?: boolean; active?: boolean }[] = [
  {
    icon: (
      <svg viewBox="0 0 24 24" className="size-6">
        <circle cx="12" cy="12" r="12" fill="#1b74c5" />
        <path d="M1 9C3 3 8 0 12 0c7 0 12 5 12 10 0 4-3 6-6 6-3 0-4-1-4-2 1-1 1.500-2 1-3.500C13 6 5 6 1 9z" fill="#4fd07f" />
        <path d="M1 9c4-3 12-3 14 1.500-3-2-8 1-7 6 1 4 5 6 9 6.500C8 26-2 20 1 9z" fill="#135ea8" />
      </svg>
    ),
  },
  {
    icon: (
      <span className="relative">
        <svg viewBox="0 0 24 24" className="size-6">
          <path d="M4 3l6 2c2-3 6-4 8-4l-1 3c5 3 7 8 5 13a11 11 0 0 1-20 0C0 11 3 8 5 7z" fill="#1a7be0" />
          <path d="M3 11c5 6 12 5 17 0l-2 10c-6 3-13 0-15-10z" fill="#dcecff" />
        </svg>
        <span className="absolute -bottom-1 -right-1 size-[15px] rounded-full bg-[#f0104a] text-center text-[10px] leading-[15px] text-white">1</span>
      </span>
    ),
    running: true,
  },
  {
    icon: (
      <svg viewBox="0 0 24 24" className="size-6">
        <path d="M8 6V2h8v4" fill="none" stroke="#29b6f6" strokeWidth="2" />
        <rect x="1" y="5" width="22" height="18" rx="3" fill="#f4f4f4" />
        <path d="M8 9h4v4H8z" fill="#f25022" /><path d="M13 9h4v4h-4z" fill="#7fba00" />
        <path d="M8 14h4v4H8z" fill="#00a4ef" /><path d="M13 14h4v4h-4z" fill="#ffb900" />
      </svg>
    ),
  },
  {
    icon: (
      <svg viewBox="0 0 24 24" className="size-6">
        <path d="M9.500 21.500a10 10 0 1 1 5 0" fill="none" stroke="#00caff" strokeWidth="3.500" />
      </svg>
    ),
    running: true,
  },
  {
    icon: (
      <svg viewBox="0 0 24 24" className="size-6">
        <circle cx="12" cy="12" r="12" fill="#fbc116" />
        <path d="M12 12L1.600 6A12 12 0 0 1 22.400 6z" fill="#e33b2e" />
        <path d="M12 12L1.600 6A12 12 0 0 0 11 24l5-9z" fill="#2da94f" />
        <circle cx="12" cy="12" r="5.500" fill="#fff" /><circle cx="12" cy="12" r="4.300" fill="#3f7ef0" />
      </svg>
    ),
  },
  { icon: <span className="[&>svg]:size-6">{favicons.firefox}</span>, running: true, active: true },
  {
    icon: (
      <svg viewBox="0 0 24 24" className="size-6">
        <circle cx="12" cy="12" r="12" fill="#ff9a1f" />
        <path d="M12 0a12 12 0 0 1 10 18C23 8 18 4 8 1z" fill="#8a4bff" />
        <path d="M6 7l6-2 6 2v5c0 4-3 6-6 7-3-1-6-3-6-7z" fill="#fff" />
        <path d="M12 10v4" stroke="#553399" strokeWidth="2.500" />
      </svg>
    ),
  },
  {
    icon: (
      <svg viewBox="0 0 24 24" className="size-6">
        <path d="M1 3h8l2 2h12v15H1z" fill="#f3b93e" />
        <path d="M1 8h22v12H1z" fill="#fcd975" />
        <path d="M5 13h14v8h-4v-4H9v4H5z" fill="#3a91d8" />
      </svg>
    ),
    running: true,
  },
  {
    icon: (
      <span className="h-5 w-6 border border-[#999] bg-black pl-0.5 text-left font-['Liberation_Mono'] text-[7px] leading-[10px] text-white">C:\_</span>
    ),
    running: true,
  },
  { icon: <FaFacebook className="size-6 rounded-full bg-white text-[#0a84f0]" /> },
  {
    icon: (
      <svg viewBox="0 0 24 24" className="size-6">
        <rect y="4" width="24" height="16" rx="4" fill="#f00" />
        <path d="M9.500 8.500l6 3.500-6 3.500z" fill="#fff" />
      </svg>
    ),
  },
  {
    icon: (
      <svg viewBox="0 0 24 24" className="size-6">
        <path d="M2 2l17-1 2 13-16 2z" fill="#e7edf4" /><path d="M4 3.500l13.500-1L19 13 6 14z" fill="#1840c8" />
        <path d="M7 17h7l1 5H5z" fill="#c8ccd0" />
        <circle cx="17" cy="18" r="5.500" fill="#e8ece8" /><path d="M15 16l2 2-2 3m4-5l-2 2 2 3" stroke="#2c8a2c" strokeWidth="1.200" fill="none" />
      </svg>
    ),
  },
  {
    icon: (
      <svg viewBox="0 0 24 24" className="size-6">
        <path d="M12 1l9 5v10l-9 7-9-7V6z" fill="#16365f" stroke="#a9c3dd" strokeWidth="1.500" />
        <path d="M3 6l9 5 9-5M12 11v12" stroke="#dce9f5" strokeWidth="2" fill="none" />
      </svg>
    ),
  },
  {
    icon: (
      <svg viewBox="0 0 24 24" className="size-6">
        <path d="M3 3h12v19l-12-1z" fill="#fbd56b" /><path d="M3 3h5v18H3z" fill="#fff0bd" />
        <path d="M11 22a4 4 0 0 1 0-7 5 5 0 0 1 9 1 3 3 0 0 1 1 6z" fill="#1583d8" />
      </svg>
    ),
  },
  {
    icon: (
      <span className="relative">
        <FaWhatsapp className="size-6 text-[#25d366]" />
        <span className="absolute -bottom-1 -right-2 size-4 rounded-full border border-[#aaa] bg-[#303030] text-center text-[11px] leading-[14px] text-white">1</span>
      </span>
    ),
    running: true,
  },
  {
    icon: (
      <svg viewBox="0 0 24 24" className="size-6">
        <rect width="24" height="24" rx="5" fill="#0b5bd3" />
        <circle cx="12" cy="12" r="7.500" fill="#e6edf7" /><path d="M12 8.500l3.500 3.500-3.500 3.500L8.500 12z" fill="none" stroke="#0b5bd3" strokeWidth="1.500" />
      </svg>
    ),
    running: true,
  },
  {
    icon: (
      <svg viewBox="0 0 24 24" className="size-6">
        <path d="M1 2l9-1 1 8-9 2zM14 2l9-1-2 12-6 1z" fill="#cfd6dc" /><path d="M15 3l6-1-1 6-4 1z" fill="#1da0e8" />
        <path d="M12 21l9-1v2h-9z" fill="#cfd6dc" />
        <path d="M1 23l6-6" stroke="#f2b01e" strokeWidth="3.500" />
        <circle cx="11" cy="12" r="6.500" fill="#8edcf8" stroke="#e9f6fc" strokeWidth="1.500" />
      </svg>
    ),
    running: true,
  },
];

function Taskbar() {
  return (
    <footer className="flex h-10 shrink-0 items-stretch justify-between bg-[#2a2a2a] font-['Open_Sans',sans-serif] text-xs text-white">
      <div className="flex">
        <button aria-label="Start" className="flex w-12 items-center justify-center"><FaWindows className="size-4" /></button>
        <label className="flex w-72 items-center gap-3 border border-[#bdbdbd] bg-[#f1f1f1] px-2.5 text-[#333]">
          <Search className="size-[18px] -scale-x-100" strokeWidth={2} />
          <input aria-label="Suchen" placeholder="Suchen" className="w-40 text-sm outline-none placeholder:text-[#333]" />
        </label>
        <span className="mx-1.5 h-6 w-1 self-center border-x border-[#555]" />
        <div className="flex gap-[9px] pl-[11px]">
          {taskIcons.map((task, i) => (
            <button
              key={i}
              aria-label="Programm"
              className={`flex w-10 items-center justify-center border-b-2 pt-0.5 ${task.running ? 'border-[#76b9ed]' : 'border-transparent'} ${task.active ? 'bg-[#58595b]' : ''}`}
            >
              {task.icon}
            </button>
          ))}
        </div>
      </div>
      <div className="flex items-center">
        <span className="mr-2.5 h-6 w-1 border-x border-[#555]" />
        <label className="flex h-full w-[292px] items-center gap-2.5 bg-[#ededed] px-3.5">
          <FcGoogle className="size-[18px] rounded-full bg-white" />
          <input aria-label="Google Websuche" placeholder="Google Websuche" className="w-48 font-[Roboto] text-base outline-none placeholder:text-[#777]" />
        </label>
        <button aria-label="Hinzufügen" className="flex w-8 justify-center"><Plus className="size-4" strokeWidth={2} /></button>
        <span className="relative ml-[76px] size-5 rounded-full bg-gradient-to-b from-[#f9a51a] to-[#f07410]">
          <span className="absolute -right-1 -top-1 size-3 rounded-full bg-[#c42b1c] text-center text-[9px] leading-3">1</span>
        </span>
        <span className="ml-2.5 whitespace-pre text-[13px]">14°C  Zonnig</span>
        <ChevronUp className="ml-6 size-4" strokeWidth={2} />
        <MeetNowIcon className="ml-2.5 size-4" />
        <span className="relative ml-2">
          <MdCloud className="size-4 text-[#b8b8b8]" />
          <span className="absolute -bottom-0.5 -right-0.5 size-[9px] rounded-full bg-[#3fa9f5] text-center text-[8px] leading-[9px]">i</span>
        </span>
        <Monitor className="ml-2 size-4" strokeWidth={2} />
        <span className="ml-2.5 text-[11px]">DEU</span>
        <span className="ml-3.5 flex flex-col text-center text-[11px] leading-[18px]"><span>11:02</span><span>10.03.2025</span></span>
        <span className="relative ml-4">
          <MdChat className="size-[18px]" />
          <span className="absolute -bottom-2 -right-2 size-[18px] rounded-full border border-[#aaa] bg-[#2a2a2a] text-center text-[10px] leading-4">21</span>
        </span>
        <span className="ml-5 mr-[3px] h-full w-px bg-[#777]" />
      </div>
    </footer>
  );
}

export default function App() {
  return (
    <div className="flex h-screen flex-col overflow-hidden bg-white font-['Liberation_Sans',Arial,sans-serif] text-[#212121]">
      <div className="shrink-0 font-['Open_Sans',sans-serif] text-[11px] text-[#fbfbfe]">
        <div className="bg-[#55367b]">
          <MenuBar />
          <TabStrip />
        </div>
        <div className="bg-[#7150a0]">
          <NavBar />
          <BookmarkBar />
        </div>
      </div>

      <div className="flex min-h-0 flex-1">
        <Sidebar />
        <div className="flex min-w-0 flex-1 flex-col">
          <AppHeader />
          <main className="mx-[9px] mb-[9px] mt-[9px] flex min-h-0 flex-1 flex-col overflow-hidden rounded bg-white text-lg shadow-[0_1px_4px_rgba(0,0,0,0.4)]">
            <Toolbar />
            <div className="flex min-h-0 flex-1">
              <div className="min-w-0 flex-1 overflow-hidden">
                <div className="shadow-[0_1px_3px_rgba(0,0,0,0.4)]">
                  {firstGroup.map((instance) => <InstanceRow key={instance.name} instance={instance} />)}
                </div>
                <div className="my-4 shadow-[0_1px_3px_rgba(0,0,0,0.4)]">
                  <InstanceRow instance={expanded} open />
                  <InstanceDetails />
                </div>
                <div className="border-t border-black/20">
                  {secondGroup.map((instance) => <InstanceRow key={instance.name} instance={instance} />)}
                </div>
              </div>
              <div className="w-2 shrink-0 bg-[#c8c8c8]">
                <div className="h-[62%] bg-[#555]" />
              </div>
            </div>
          </main>
        </div>
      </div>

      <Taskbar />
    </div>
  );
}
